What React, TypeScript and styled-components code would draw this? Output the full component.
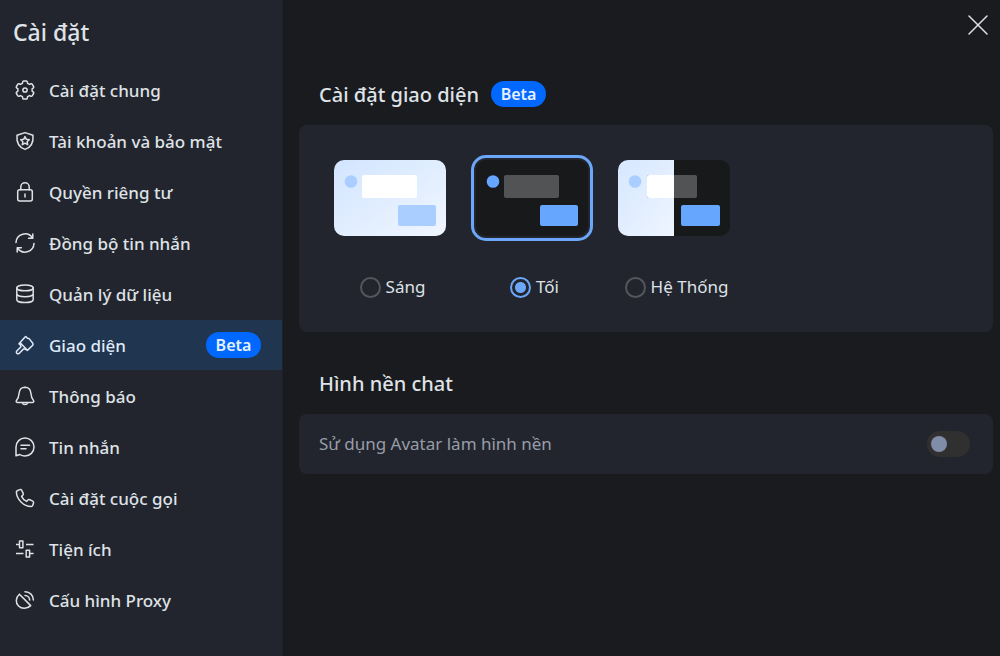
import React, { useState } from "react";
import styled, { createGlobalStyle, css } from "styled-components";

const GlobalStyle = createGlobalStyle`
  *, *::before, *::after { box-sizing: border-box; }
  body {
    margin: 0;
    background: #191b1e;
    color: #dfe2e7;
    font-family: "Noto Sans", "Open Sans", sans-serif;
    font-size: 17px;
    line-height: 24px;
  }
  h1, h2 { margin: 0; font-weight: 500; }
  button { font: inherit; color: inherit; border: 0; background: none; padding: 0; cursor: pointer; }
`;

const Page = styled.div`
  display: grid;
  grid-template-columns: 283px minmax(0, 1fr);
  min-height: 100vh;
`;

const Sidebar = styled.aside`
  background: #22252d;
  border-right: 1px solid #1e2126;
`;

const SidebarTitle = styled.h1`
  padding: 16px 13px 17px;
  font-size: 23px;
  line-height: 32px;
`;

const Nav = styled.nav`
  display: flex;
  flex-direction: column;
  gap: 1px;
`;

const NavItem = styled.button<{ $active: boolean }>`
  display: flex;
  align-items: center;
  gap: 14px;
  height: 50px;
  padding: 0 21px 0 15px;
  text-align: left;
  font-weight: 500;
  ${(p) => p.$active && css`background: #20354f; color: #dfe9f7;`}
`;

const NavLabel = styled.span`
  flex: 1;
  padding-top: 2px;
  white-space: nowrap;
`;

const Icon = styled.svg`
  flex: none;
  width: 20px;
  height: 20px;
  overflow: visible;
  fill: none;
  stroke: currentColor;
  stroke-width: 1.5;
  stroke-linecap: round;
  stroke-linejoin: round;
`;

const Badge = styled.span`
  flex: none;
  width: 55px;
  border-radius: 13px;
  background: #0068ff;
  color: #e6f0ff;
  font-size: 16px;
  font-weight: 600;
  line-height: 26px;
  text-align: center;
`;

const Main = styled.main`
  display: flex;
  flex-direction: column;
  padding: 0 7px 24px 16px;
`;

const TopBar = styled.div`
  display: flex;
  justify-content: flex-end;
  align-items: center;
  height: 50px;
  padding-right: 5px;
`;

const CloseButton = styled.button`
  display: flex;
`;

const SectionTitle = styled.div`
  display: flex;
  align-items: center;
  gap: 12px;
  padding: 30px 20px 17px;
`;

const Heading = styled.h2`
  padding-top: 2px;
  font-size: 20px;
  line-height: 26px;
`;

const ThemePanel = styled.fieldset`
  display: flex;
  flex-wrap: wrap;
  gap: 20px;
  margin: 0 0 7px;
  padding: 30px 30px 33px;
  border: 0;
  border-radius: 8px;
  background: #22252d;
`;

const ThemeOption = styled.label`
  display: flex;
  flex-direction: column;
  align-items: center;
  gap: 34px;
  width: 122px;
  cursor: pointer;
`;

const PreviewFrame = styled.span<{ $selected: boolean }>`
  display: flex;
  padding: 2px;
  border: 3px solid ${(p) => (p.$selected ? "#6ba6f8" : "transparent")};
  border-radius: 15px;
`;

const Preview = styled.svg`
  width: 112px;
  height: 76px;
  border-radius: 10px;
`;

const Choice = styled.span`
  display: flex;
  align-items: center;
  gap: 5px;
  padding-left: 5px;
  white-space: nowrap;
`;

const Radio = styled.input`
  appearance: none;
  width: 21px;
  height: 21px;
  margin: 0;
  border: 2px solid #53575c;
  border-radius: 50%;
  &:checked {
    border-color: #6ba6f8;
    background: radial-gradient(circle, #6ba6f8 0 5px, transparent 6px);
  }
`;

const SettingRow = styled.label`
  display: flex;
  align-items: center;
  justify-content: space-between;
  min-height: 60px;
  padding: 0 23px 0 20px;
  border-radius: 8px;
  background: #22252d;
  color: #979da8;
`;

const Switch = styled.input`
  appearance: none;
  display: flex;
  align-items: center;
  width: 43px;
  height: 26px;
  margin: 0;
  padding: 0 4px;
  border-radius: 13px;
  background: #303030;
  &::before {
    content: "";
    width: 16px;
    height: 16px;
    border-radius: 50%;
    background: #7f8da9;
  }
  &:checked { justify-content: flex-end; background: #0068ff; }
`;

const navItems: { label: string; icon: React.ReactNode; badge?: string }[] = [
  {
    label: "Cài đặt chung",
    icon: (
      <>
        <path d="M8.600.9h2.800q.8 0 .9.900l.3 1.500 1.900 1.100 1.400-.6q.9-.3 1.400.5l1.300 2.200q.4.9-.2 1.400l-1.300 1v2.200l1.300 1q.6.5.2 1.400l-1.300 2.200q-.5.8-1.400.5l-1.400-.6-1.900 1.100-.3 1.500q-.1.9-.9.9H8.600q-.8 0-.9-.9l-.3-1.500-1.900-1.100-1.400.6q-.9.3-1.400-.5l-1.300-2.200q-.4-.9.200-1.400l1.300-1V8.900l-1.300-1q-.6-.5-.2-1.400l1.300-2.200q.5-.8 1.400-.5l1.400.6 1.900-1.100.3-1.500q.1-.9.900-.9z" />
        <circle cx="10" cy="10" r="2.1" />
      </>
    ),
  },
  {
    label: "Tài khoản và bảo mật",
    icon: (
      <>
        <path d="M10 1.600 18 4.200C18.600 11 15.800 16.400 10 18.400 4.200 16.400 1.400 11 2 4.200z" />
        <path d="m10 5.600 1.300 2.700 3 .4-2.200 2 .6 3-2.700-1.500-2.700 1.500.6-3-2.200-2 3-.4z" />
      </>
    ),
  },
  {
    label: "Quyền riêng tư",
    icon: (
      <>
        <rect x="2.700" y="7.800" width="14.600" height="11.200" rx="2" />
        <path d="M5.800 7.800V5a4.200 4.200 0 0 1 8.400 0v2.800M10 12v3" />
      </>
    ),
  },
  {
    label: "Đồng bộ tin nhắn",
    icon: (
      <path d="M1 9.500A9 9 0 0 1 17.500 5M17.800 1v4.200h-4.200M19 10.500A9 9 0 0 1 2.500 15M2.200 19v-4.200h4.200" />
    ),
  },
  {
    label: "Quản lý dữ liệu",
    icon: (
      <>
        <ellipse cx="10" cy="3.900" rx="8.200" ry="2.900" />
        <path d="M1.800 3.900v11.800c0 1.600 3.700 2.900 8.200 2.900s8.200-1.300 8.200-2.900V3.900M1.800 9.800c0 1.600 3.700 2.900 8.200 2.900s8.200-1.300 8.200-2.900" />
      </>
    ),
  },
  {
    label: "Giao diện",
    badge: "Beta",
    icon: (
      <path d="m9.600 2.400 1.200-.9 1.600 1.700 1.500.2 3.900 4.800.2 1.800-5.600 5.400-2-1-1.800-.5-4.300 4.300c-.8.8-1.900.6-2.500 0s-.6-1.700.2-2.500l4-3.900-.8-2.200-1.200-.8zM5.400 8l6.800 7" />
    ),
  },
  {
    label: "Thông báo",
    icon: (
      <path d="M10 1.200c-3.700 0-5.600 2.600-5.900 6-.3 3.600-.8 5.200-2.600 7.200-.8 1 0 2.100 1.100 2.100h14.800c1.100 0 1.900-1.100 1.100-2.100-1.800-2-2.300-3.600-2.600-7.200-.3-3.400-2.200-6-5.900-6M7.400 16.800c.5 2.400 4.700 2.400 5.200 0" />
    ),
  },
  {
    label: "Tin nhắn",
    icon: (
      <path d="M1 18.800V10a9 9 0 1 1 9 9c-2 0-3.700-.5-5.200-1.500L1 18.800M6 8.200h8.500M6 11.700h5" />
    ),
  },
  {
    label: "Cài đặt cuộc gọi",
    icon: (
      <path d="M2.200 2.700 4.700 1.600c.8-.4 1.600-.1 1.900.6l1.600 3.200c.3.700.2 1.300-.4 1.800L6.600 8.400c.9 2.200 2.700 4 5 5l1.200-1.300c.5-.6 1.200-.7 1.900-.4l3 1.500c.8.4 1.100 1.100.8 1.900l-.8 2.300c-.2.700-.8 1.100-1.500 1.100C8.800 18.500 1.500 11.200 1.400 4c0-.6.300-1.100.8-1.300z" />
    ),
  },
  {
    label: "Tiện ích",
    icon: (
      <path strokeLinecap="butt" d="M1 5.400h3.500M4.500 2h3.400v6.800H4.500zM11 5.400h7.500M1 14.600h7.500M11.200 11.200h3.400V18h-3.400zM14.600 14.600h4" />
    ),
  },
  {
    label: "Cấu hình Proxy",
    icon: (
      <path d="M4.400 4.200 15.700 15.600M4.400 4.200c-3.900 3.400-4 8.700-.9 11.800 3.200 3.200 8.500 3.200 12.200-.4M10 5.400a4.800 4.800 0 0 1 4.700 4.600M10 1.700a8.200 8.200 0 0 1 8.400 8.400" />
    ),
  },
];

const LightPreview = () => (
  <Preview viewBox="0 0 112 76" aria-hidden="true">
    <defs>
      <linearGradient id="lightFill" x1="0" y1="0" x2="1" y2="1">
        <stop offset="0" stopColor="#d2e5ff" />
        <stop offset="1" stopColor="#f0f6ff" />
      </linearGradient>
    </defs>
    <rect width="112" height="76" fill="url(#lightFill)" />
    <circle cx="17" cy="21.500" r="6.300" fill="#aaceff" />
    <rect x="28" y="15" width="55" height="23" rx="2" fill="#fff" />
    <rect x="64" y="45" width="38" height="21" rx="2" fill="#aaceff" />
  </Preview>
);

const DarkPreview = () => (
  <Preview viewBox="0 0 112 76" aria-hidden="true">
    <rect width="112" height="76" fill="#18191b" />
    <circle cx="17" cy="21.500" r="6.300" fill="#66a6ff" />
    <rect x="28" y="15" width="55" height="23" rx="2" fill="#525355" />
    <rect x="64" y="45" width="38" height="21" rx="2" fill="#66a6ff" />
  </Preview>
);

const SystemPreview = () => (
  <Preview viewBox="0 0 112 76" aria-hidden="true">
    <defs>
      <linearGradient id="systemFill" x1="0" y1="0" x2="1" y2="1">
        <stop offset="0" stopColor="#d6e7ff" />
        <stop offset="1" stopColor="#eef5ff" />
      </linearGradient>
    </defs>
    <rect width="112" height="76" fill="#18191b" />
    <rect width="56" height="76" fill="url(#systemFill)" />
    <circle cx="17" cy="21.500" r="6.300" fill="#aaceff" />
    <rect x="29" y="15" width="50" height="23" rx="2" fill="#525355" />
    <path d="M56 15H31a2 2 0 0 0-2 2v19a2 2 0 0 0 2 2h25z" fill="#fff" />
    <rect x="63" y="45" width="39" height="21" rx="2" fill="#66a6ff" />
  </Preview>
);

const themes = [
  { id: "light", label: "Sáng", Art: LightPreview },
  { id: "dark", label: "Tối", Art: DarkPreview },
  { id: "system", label: "Hệ Thống", Art: SystemPreview },
];

export default function App() {
  const [section, setSection] = useState("Giao diện");
  const [theme, setTheme] = useState("dark");
  const [avatarBackground, setAvatarBackground] = useState(false);

  return (
    <>
      <GlobalStyle />
      <Page>
        <Sidebar>
          <SidebarTitle>Cài đặt</SidebarTitle>
          <Nav>
            {navItems.map((item) => (
              <NavItem
                key={item.label}
                type="button"
                $active={item.label === section}
                onClick={() => setSection(item.label)}
              >
                <Icon viewBox="0 0 20 20" aria-hidden="true">{item.icon}</Icon>
                <NavLabel>{item.label}</NavLabel>
                {item.badge && <Badge>{item.badge}</Badge>}
              </NavItem>
            ))}
          </Nav>
        </Sidebar>
        <Main>
          <TopBar>
            <CloseButton type="button" aria-label="Đóng">
              <Icon viewBox="0 0 20 20" aria-hidden="true">
                <path d="M1 1l18 18M19 1 1 19" />
              </Icon>
            </CloseButton>
          </TopBar>
          <SectionTitle>
            <Heading>Cài đặt giao diện</Heading>
            <Badge>Beta</Badge>
          </SectionTitle>
          <ThemePanel aria-label="Cài đặt giao diện">
            {themes.map(({ id, label, Art }) => (
              <ThemeOption key={id}>
                <PreviewFrame $selected={theme === id}>
                  <Art />
                </PreviewFrame>
                <Choice>
                  <Radio
                    type="radio"
                    name="theme"
                    value={id}
                    checked={theme === id}
                    onChange={() => setTheme(id)}
                  />
                  {label}
                </Choice>
              </ThemeOption>
            ))}
          </ThemePanel>
          <SectionTitle>
            <Heading>Hình nền chat</Heading>
          </SectionTitle>
          <SettingRow>
            Sử dụng Avatar làm hình nền
            <Switch
              type="checkbox"
              role="switch"
              checked={avatarBackground}
              onChange={(e) => setAvatarBackground(e.target.checked)}
            />
          </SettingRow>
        </Main>
      </Page>
    </>
  );
}
